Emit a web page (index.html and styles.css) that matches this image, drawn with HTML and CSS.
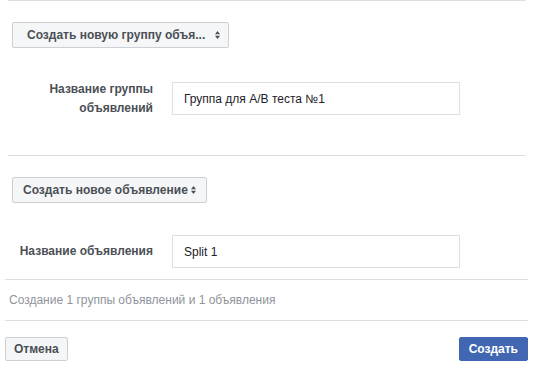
FILE: index.html
```html
<!DOCTYPE html>
<html lang="ru">
  <head>
    <meta charset="UTF-8" />
    <meta name="viewport" content="width=device-width, initial-scale=1.0" />
    <title>Создание объявления</title>
    <link rel="stylesheet" href="styles.css">
  </head>
  <body>
    <div class="sections">
      <!-- группа объявлений -->
      <section class="block">
        <button type="button" class="picker picker-group">
          <span class="picker-text">Создать новую группу объя...</span>
          <svg class="picker-arrow" width="5" height="8" viewBox="0 0 5 8"><path d="M0 3.2L2.5 0 5 3.2z M0 4.8L2.5 8 5 4.8z" fill="#4b4f56"/></svg>
        </button>
        <div class="field">
          <label class="field-label">Название группы объявлений</label>
          <input type="text" class="field-input" value="Группа для A/B теста №1" />
        </div>
      </section>

      <!-- объявление -->
      <section class="block block-ad">
        <button type="button" class="picker">
          <span class="picker-text">Создать новое объявление</span>
          <svg class="picker-arrow" width="5" height="8" viewBox="0 0 5 8"><path d="M0 3.2L2.5 0 5 3.2z M0 4.8L2.5 8 5 4.8z" fill="#4b4f56"/></svg>
        </button>
        <div class="field field-ad">
          <label class="field-label">Название объявления</label>
          <input type="text" class="field-input" value="Split 1" />
        </div>
      </section>
    </div>

    <p class="summary">Создание 1 группы объявлений и 1 объявления</p>

    <div class="actions">
      <button type="button" class="btn">Отмена</button>
      <button type="button" class="btn btn-primary">Создать</button>
    </div>
  </body>
</html>
```

FILE: styles.css
```css
html, body, div, section, p, span, label, input, button {
  margin: 0;
  padding: 0;
  box-sizing: border-box;
}

body {
  font-family: "Liberation Sans", Arial, sans-serif;
  font-size: 12px;
  color: #1d2129;
  background: #fff;
}

.sections {
  margin: 0 12px 0 8px;
}

.block {
  border-top: 1px solid #dddfe2;
  padding: 21px 0 40px 4px;
}

.block-ad {
  padding-bottom: 11px;
}

.picker {
  display: flex;
  align-items: center;
  height: 26px;
  padding: 0 10px;
  border: 1px solid #ccd0d5;
  border-radius: 2px;
  background: #f5f6f7;
  font-family: inherit;
  font-size: 12px;
  font-weight: bold;
  color: #4b4f56;
  white-space: nowrap;
}

.picker-group {
  width: 217px;
  padding: 0 11px 0 14px;
}

.picker-group .picker-arrow {
  margin-left: 10px;
}

.picker-arrow {
  flex: none;
  margin-left: 3px;
}

.field {
  display: flex;
  align-items: center;
  height: 33px;
  margin-top: 34px;
}

.field-ad {
  margin-top: 32px;
}

.field-label {
  width: 141px;
  text-align: right;
  font-weight: bold;
  line-height: 19px;
  color: #4b4f56;
}

.field-input {
  margin-left: 19px;
  width: 288px;
  height: 33px;
  padding: 0 11px;
  border: 1px solid #dddfe2;
  font-family: inherit;
  font-size: 12px;
  color: #1d2129;
  outline: none;
}

.summary {
  margin: 0 10px 0 5px;
  border-top: 1px solid #dddfe2;
  border-bottom: 1px solid #dddfe2;
  padding: 12px 0 12px 4px;
  line-height: 16px;
  color: #90949c;
}

.actions {
  display: flex;
  justify-content: space-between;
  margin: 16px 10px 0 5px;
}

.btn {
  height: 24px;
  padding: 0 8px;
  border: 1px solid #ccd0d5;
  border-radius: 2px;
  background: #f5f6f7;
  font-family: inherit;
  font-size: 12px;
  font-weight: bold;
  color: #4b4f56;
}

.btn-primary {
  padding: 0 9px;
  border-color: #4267b2;
  background: #4267b2;
  color: #fff;
}
```
